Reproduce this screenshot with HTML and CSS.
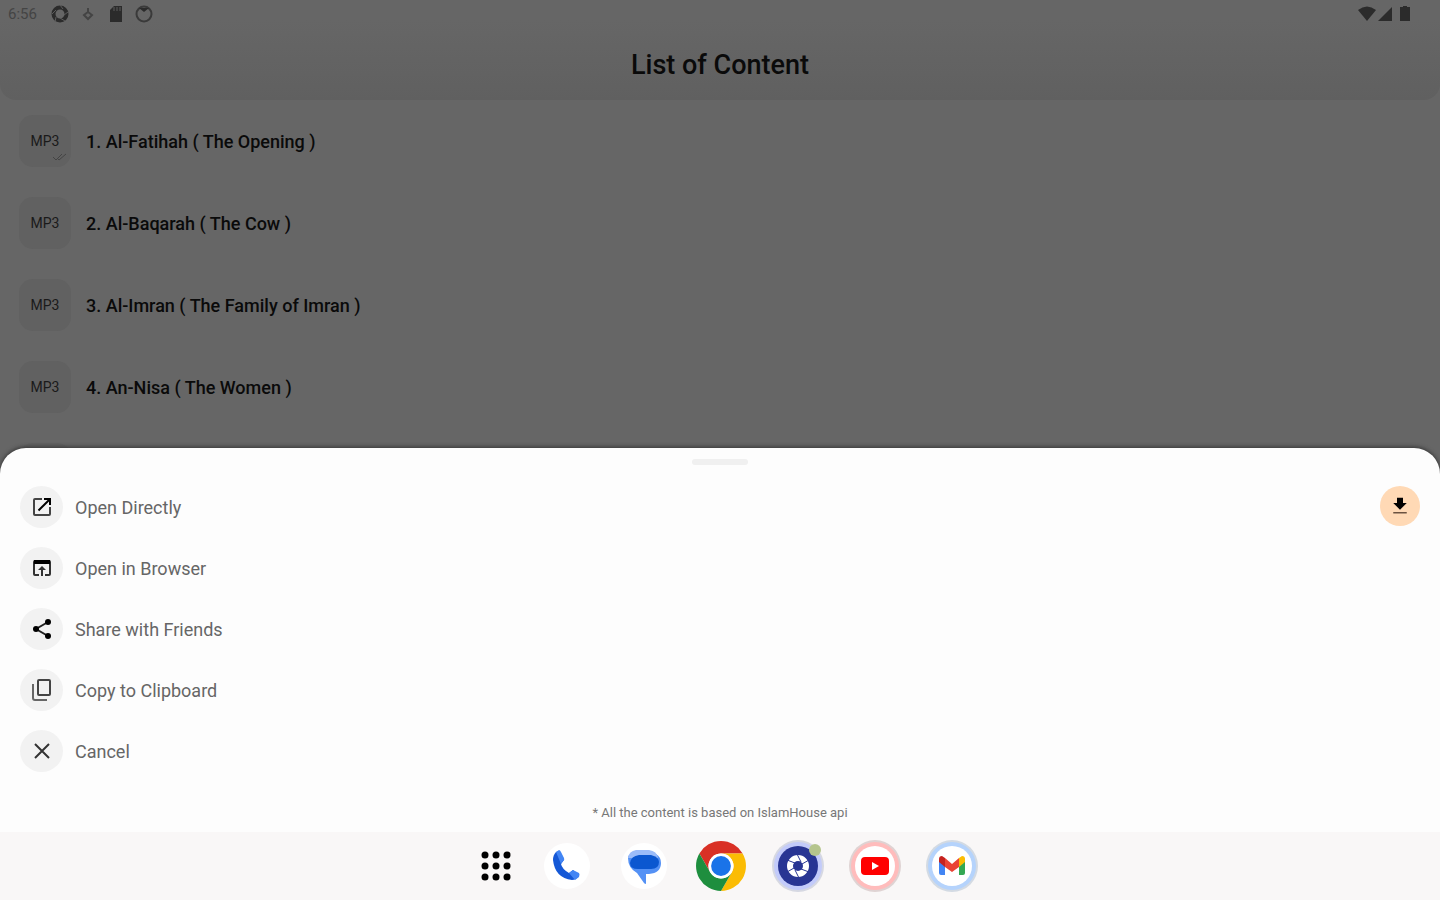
FILE: index.html
```html
<!DOCTYPE html>
<html lang="en">
<head>
    <meta charset="UTF-8">
    <meta name="viewport" content="width=device-width, initial-scale=1.0">
    <title>List of Content</title>
    <link rel="stylesheet" href="styles.css">
</head>
<body>
    <main class="app">
        <header class="header">
            <div class="statusbar">
                <span class="time">6:56</span>
                <svg class="status-icon" viewBox="0 0 20 20"><circle cx="10" cy="10" r="6.500" fill="none" stroke="#2b2b2b" stroke-width="4"/><path d="M10 1l3 4M18 8l-4 3M15 17l-5-3M5 18l1-5M2 10l4-4" stroke="#5c5c5c"/></svg>
                <svg class="status-icon" viewBox="0 0 20 20"><path d="M10 4v5M6 11l4-3 4 3-4 4z" fill="none" stroke="#444" stroke-width="2"/></svg>
                <svg class="status-icon" viewBox="0 0 20 20"><path d="M8 2h8v16H4V6z" fill="#2b2b2b"/><path d="M8 3v4M11 3v4M14 3v4" stroke="#5c5c5c"/></svg>
                <svg class="status-icon" viewBox="0 0 20 20"><circle cx="10" cy="10" r="7.500" fill="none" stroke="#3a3a3a" stroke-width="2"/><path d="M5 4h10l-5 4z" fill="#2b2b2b"/></svg>
                <div class="signals">
                    <svg width="18" height="16" viewBox="0 0 18 16"><path d="M0 4Q9-3 18 4L9 15z" fill="#2b2b2b"/></svg>
                    <svg width="14" height="16" viewBox="0 0 14 16"><path d="M14 1v14H0z" fill="#2b2b2b"/></svg>
                    <svg class="battery" width="10" height="16" viewBox="0 0 10 16"><path d="M3 0h4v1h3v14H0V1h3z" fill="#2b2b2b"/></svg>
                </div>
            </div>
            <h1>List of Content</h1>
        </header>
        <ul class="list">
            <li>
                <div class="tile">MP3
                    <svg class="check" width="14" height="8" viewBox="0 0 14 8"><path d="M0 4l3 3 6-6M5 6l1 1 7-6" fill="none" stroke="#444"/></svg>
                </div>
                <span>1. Al-Fatihah ( The Opening )</span>
            </li>
            <li><div class="tile">MP3</div><span>2. Al-Baqarah ( The Cow )</span></li>
            <li><div class="tile">MP3</div><span>3. Al-Imran ( The Family of Imran )</span></li>
            <li><div class="tile">MP3</div><span>4. An-Nisa ( The Women )</span></li>
            <li><div class="tile"></div></li>
        </ul>
    </main>

    <section class="sheet">
        <div class="handle"></div>
        <div class="sheet-body">
            <div class="actions">
                <button class="action">
                    <span class="circle"><svg viewBox="0 0 24 24"><path d="M19 19H5V5h7V3H5a2 2 0 0 0-2 2v14a2 2 0 0 0 2 2h14a2 2 0 0 0 2-2v-7h-2z" fill="#444"/><path d="M14 3v2h3.600l-9.800 9.800 1.400 1.400L19 6.400V10h2V3z"/></svg></span>
                    Open Directly
                </button>
                <button class="action">
                    <span class="circle"><svg viewBox="0 0 24 24"><path d="M19 4H5a2 2 0 0 0-2 2v12a2 2 0 0 0 2 2h4v-2H5V8h14v10h-4v2h4a2 2 0 0 0 2-2V6a2 2 0 0 0-2-2zm-7 6l-4 4h3v6h2v-6h3z" fill="#333"/><path d="M4 4h16v4H4z"/></svg></span>
                    Open in Browser
                </button>
                <button class="action">
                    <span class="circle"><svg viewBox="0 0 24 24"><path d="M18 5L6 12l12 7" fill="none" stroke="#222" stroke-width="2"/><circle cx="18" cy="5" r="3"/><circle cx="6" cy="12" r="3"/><circle cx="18" cy="19" r="3"/></svg></span>
                    Share with Friends
                </button>
                <button class="action">
                    <span class="circle"><svg viewBox="0 0 24 24"><rect x="8" y="2" width="12" height="15" rx="1" fill="none" stroke="#444" stroke-width="2"/><path d="M3 6v14a2 2 0 0 0 2 2h12" fill="none" stroke="#666" stroke-width="2"/></svg></span>
                    Copy to Clipboard
                </button>
                <button class="action">
                    <span class="circle"><svg viewBox="0 0 24 24"><path d="M5 5l14 14M19 5L5 19" stroke="#333" stroke-width="2"/></svg></span>
                    Cancel
                </button>
            </div>
            <button class="download" aria-label="Download">
                <svg viewBox="0 0 24 24"><path d="M8 1h8v7h5l-9 9-9-9h5z"/><path d="M3 21h18" stroke="#6b5240" stroke-width="2"/></svg>
            </button>
        </div>
        <p class="note">* All the content is based on IslamHouse api</p>
    </section>

    <nav class="taskbar">
        <button class="apps" aria-label="All apps">
            <svg width="30" height="30" viewBox="0 0 30 30"><circle cx="4" cy="4" r="3.500"/><circle cx="15" cy="4" r="3.500"/><circle cx="26" cy="4" r="3.500"/><circle cx="4" cy="15" r="3.500"/><circle cx="15" cy="15" r="3.500"/><circle cx="26" cy="15" r="3.500"/><circle cx="4" cy="26" r="3.500"/><circle cx="15" cy="26" r="3.500"/><circle cx="26" cy="26" r="3.500"/></svg>
        </button>
        <button aria-label="Phone">
            <svg viewBox="0 0 52 52"><circle cx="26" cy="26" r="23" fill="#fff"/><path d="M15 12q-3 3-3 8 2 18 19 20 4 0 7-4l-6-6-4 3q-7-4-8-9l3-4-5-9z" fill="#1558d6"/><path d="M15 12l3-2q1 0 2 2l3 6q1 2-1 3l-2 3zM28 33l4-3 6 3q1 1 0 4l-4 3z" fill="#4285f4"/></svg>
        </button>
        <button aria-label="Messages">
            <svg viewBox="0 0 52 52"><circle cx="26" cy="26" r="23" fill="#fff"/><path d="M10 18q0-3 3-4h25q5 3 5 9 0 10-12 11h-3v9q0 2-2 0l-7-10q-9-5-9-15z" fill="#5491f5"/><path d="M18 10h13q8 1 9 8H10q1-7 8-8z" fill="#9bbcf9"/><path d="M21 15h12q8 2 8 7 0 7-8 7H20q-8 0-8-6 1-7 9-8z" fill="#0b57d0"/></svg>
        </button>
        <button aria-label="Chrome">
            <svg viewBox="-1 -1 50 50"><path d="M24 12h20.800A24 24 0 0 0 3.200 12l10.400 18A12 12 0 0 1 24 12z" fill="#d93025"/><path d="M24 12h20.800A24 24 0 0 1 24 48l10.400-18A12 12 0 0 0 24 12z" fill="#fbbc04"/><path d="M24 48A24 24 0 0 1 3.200 12l10.400 18a12 12 0 0 0 20.800 0z" fill="#1e8e3e"/><circle cx="24" cy="24" r="12" fill="#fff"/><circle cx="24" cy="24" r="9.500" fill="#1a73e8"/></svg>
        </button>
        <button aria-label="Camera">
            <svg viewBox="0 0 52 52"><circle cx="26" cy="26" r="26" fill="#d6d8e2"/><circle cx="26" cy="26" r="24" fill="#c3cbfa"/><circle cx="26" cy="26" r="20" fill="#283593"/><circle cx="26" cy="26" r="8" fill="none" stroke="#fff" stroke-width="6"/><path d="M25 14l4 8M37 20l-7 4M37 32l-8-3M27 38l-4-8M15 32l7-4M15 20l8 3" stroke="#283593"/><circle cx="43" cy="10" r="6" fill="#b5c58d"/></svg>
        </button>
        <button aria-label="YouTube">
            <svg viewBox="0 0 52 52"><circle cx="26" cy="26" r="26" fill="#dfd3d3"/><circle cx="26" cy="26" r="24" fill="#ffbcbc"/><circle cx="26" cy="26" r="20" fill="#fff"/><rect x="12" y="17" width="28" height="18" rx="4" fill="#f00"/><path d="M23 22v8l7-4z" fill="#fff"/></svg>
        </button>
        <button aria-label="Gmail">
            <svg viewBox="0 0 52 52"><circle cx="26" cy="26" r="26" fill="#d3dae3"/><circle cx="26" cy="26" r="24" fill="#b5d3fc"/><circle cx="26" cy="26" r="20" fill="#fff"/><path d="M13 19l6 4v12h-4q-2 0-2-2z" fill="#4285f4"/><path d="M39 19l-6 4v12h4q2 0 2-2z" fill="#34a853"/><path d="M33 18l3-2q3 0 3 3v3l-6 5z" fill="#fbbc04"/><path d="M19 18l7 6 7-6v9l-7 5-7-5z" fill="#ea4335"/><path d="M13 22v-3q0-3 3-3l3 2v9z" fill="#c5221f"/></svg>
        </button>
    </nav>
</body>
</html>
```
FILE: styles.css
```css
* {
    box-sizing: border-box;
}
body {
    margin: 0;
    height: 100vh;
    display: flex;
    flex-direction: column;
    background-color: #666;
    font-family: Roboto, "Liberation Sans", sans-serif;
    color: #000;
}
button {
    border: none;
    padding: 0;
    background: none;
    font: inherit;
    color: inherit;
    cursor: pointer;
}

/* dimmed page */
.app {
    flex: 1;
    min-height: 0;
    overflow: hidden;
}
.header {
    height: 100px;
    border-radius: 0 0 16px 16px;
    background: linear-gradient(#666 20%, #606060);
}
.statusbar {
    height: 28px;
    padding: 0 30px 0 8px;
    display: flex;
    align-items: center;
    gap: 8px;
}
.time {
    width: 34px;
    font-size: 15px;
    color: #444;
}
.status-icon {
    width: 20px;
    height: 20px;
}
.signals {
    margin-left: auto;
    display: flex;
    gap: 2px;
}
.battery {
    margin-left: 6px;
}
h1 {
    margin: 0;
    line-height: 74px;
    font-size: 27px;
    font-weight: 500;
    text-align: center;
    color: #0a0a0a;
}
.list {
    margin: 0;
    padding: 0;
    list-style: none;
    font-size: 18px;
    font-weight: 500;
    color: #0a0a0a;
}
.list li {
    height: 82px;
    padding-left: 19px;
    display: flex;
    align-items: center;
    gap: 15px;
}
.tile {
    position: relative;
    width: 52px;
    height: 52px;
    display: flex;
    align-items: center;
    justify-content: center;
    border-radius: 14px;
    background-color: #616161;
    font-size: 14px;
    font-weight: 400;
    color: #1a1a1a;
}
.check {
    position: absolute;
    right: 4px;
    bottom: 6px;
}

/* bottom sheet */
.sheet {
    padding: 11px 20px 9px;
    border-radius: 26px 26px 0 0;
    background-color: #fdfdfd;
    box-shadow: 0 -1px 4px #333;
    z-index: 1;
}
.handle {
    width: 56px;
    height: 6px;
    margin: 0 auto 21px;
    border-radius: 3px;
    background-color: #f0f0f0;
}
.sheet-body {
    display: flex;
    justify-content: space-between;
    align-items: flex-start;
}
.actions {
    display: flex;
    flex-direction: column;
    gap: 19px;
}
.action {
    height: 42px;
    display: flex;
    align-items: center;
    gap: 12px;
    font-size: 18px;
    color: #666;
}
.circle {
    width: 43px;
    height: 42px;
    display: flex;
    align-items: center;
    justify-content: center;
    border-radius: 50%;
    background-color: #f2f2f2;
}
.circle svg {
    width: 24px;
    height: 24px;
}
.download {
    width: 40px;
    height: 40px;
    display: flex;
    align-items: center;
    justify-content: center;
    border-radius: 50%;
    background-color: #ffd9b5;
}
.download svg {
    width: 18px;
    height: 20px;
}
.note {
    margin: 31px 0 0;
    line-height: 20px;
    font-size: 13px;
    text-align: center;
    color: #777;
}

/* taskbar */
.taskbar {
    height: 68px;
    display: flex;
    align-items: center;
    justify-content: center;
    gap: 25px;
    background-color: #f9f7f7;
    z-index: 1;
}
.taskbar button {
    width: 52px;
    height: 52px;
}
.taskbar button svg {
    display: block;
}
.taskbar .apps {
    width: 54px;
    padding-right: 5px;
    display: flex;
    align-items: center;
    justify-content: flex-end;
}
```
